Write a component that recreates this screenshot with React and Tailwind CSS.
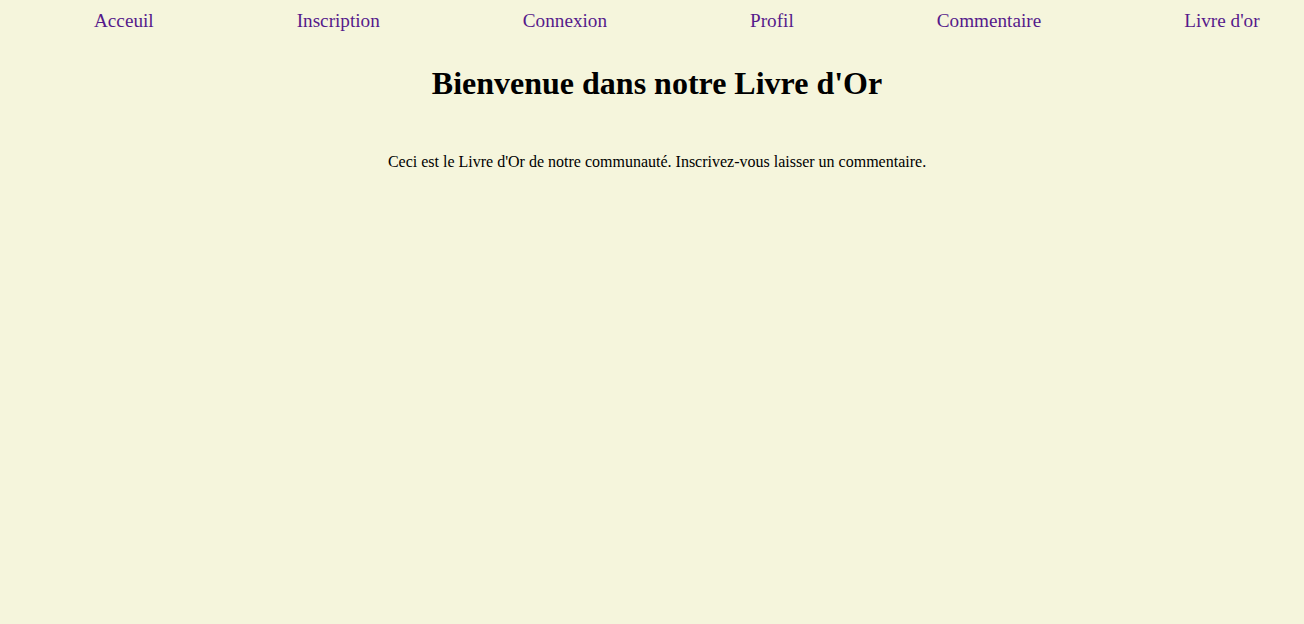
export default function App() {
  const links = ["Acceuil", "Inscription", "Connexion", "Profil", "Commentaire", "Livre d'or"];
  return (
    <div className="min-h-[624px] w-full bg-[#f5f5dc] text-black" style={{ fontFamily: '"Liberation Serif", "Times New Roman", serif' }}>
      <nav className="pt-[10px]">
        <ul className="flex gap-[143px] pl-[94px] list-none m-0">
          {links.map((l) => (
            <li key={l}>
              <a href="#" className="text-[19.2px] leading-[22px] text-[#551a8b]">{l}</a>
            </li>
          ))}
        </ul>
      </nav>
      <main className="pl-[10px] text-center">
        <h1 className="mt-[31px] text-[32px] leading-[37px] font-bold">Bienvenue dans notre Livre d'Or</h1>
        <p className="mt-[51px] text-[16px] leading-[18px]">Ceci est le Livre d'Or de notre communauté. Inscrivez-vous laisser un commentaire.</p>
      </main>
    </div>
  );
}
